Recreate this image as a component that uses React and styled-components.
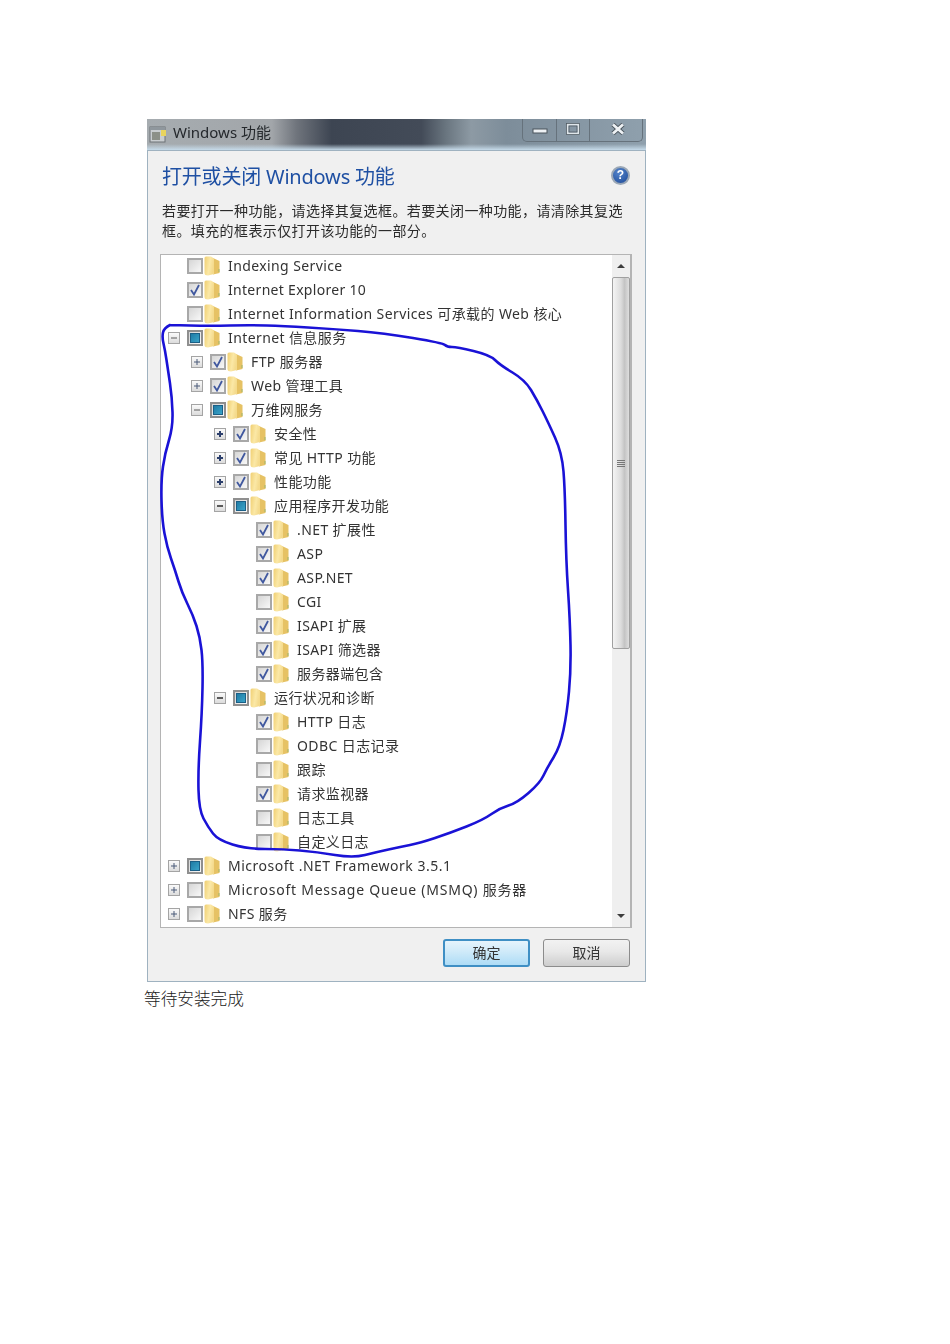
import React, { useId } from 'react'
import styled, { createGlobalStyle } from 'styled-components'

const FONT = `"Noto Sans", "Noto Sans CJK SC", sans-serif`

const rows = [
  { level: 0, state: 'empty', text: 'Indexing Service' },
  { level: 0, state: 'checked', text: 'Internet Explorer 10', spread: 0.3 },
  { level: 0, state: 'empty', text: 'Internet Information Services 可承载的 Web 核心' },
  { level: 0, state: 'partial', toggle: 'minus', text: 'Internet 信息服务' },
  { level: 1, state: 'checked', toggle: 'plus', text: 'FTP 服务器' },
  { level: 1, state: 'checked', toggle: 'plus', text: 'Web 管理工具' },
  { level: 1, state: 'partial', toggle: 'minus', text: '万维网服务' },
  { level: 2, state: 'checked', toggle: 'plus', text: '安全性' },
  { level: 2, state: 'checked', toggle: 'plus', text: '常见 HTTP 功能' },
  { level: 2, state: 'checked', toggle: 'plus', text: '性能功能' },
  { level: 2, state: 'partial', toggle: 'minus', text: '应用程序开发功能' },
  { level: 3, state: 'checked', text: '.NET 扩展性' },
  { level: 3, state: 'checked', text: 'ASP' },
  { level: 3, state: 'checked', text: 'ASP.NET' },
  { level: 3, state: 'empty', text: 'CGI' },
  { level: 3, state: 'checked', text: 'ISAPI 扩展' },
  { level: 3, state: 'checked', text: 'ISAPI 筛选器' },
  { level: 3, state: 'checked', text: '服务器端包含' },
  { level: 2, state: 'partial', toggle: 'minus', text: '运行状况和诊断' },
  { level: 3, state: 'checked', text: 'HTTP 日志' },
  { level: 3, state: 'empty', text: 'ODBC 日志记录' },
  { level: 3, state: 'empty', text: '跟踪' },
  { level: 3, state: 'checked', text: '请求监视器' },
  { level: 3, state: 'empty', text: '日志工具' },
  { level: 3, state: 'empty', text: '自定义日志' },
  { level: 0, state: 'partial', toggle: 'plus', text: 'Microsoft .NET Framework 3.5.1', spread: 0.5 },
  { level: 0, state: 'empty', toggle: 'plus', text: 'Microsoft Message Queue (MSMQ) 服务器', spread: 0.75 },
  { level: 0, state: 'empty', toggle: 'plus', text: 'NFS 服务' },
]

// hand traced pen mark, in page coordinates
const penPoints = [
  [170, 325], [164, 328], [162, 337], [165, 350], [168, 370], [172, 397], [173, 427], [165, 453],
  [161, 480], [162, 520], [167, 547], [175, 570], [182, 593], [193, 615], [200, 637], [203, 663],
  [202, 713], [198, 770], [199, 810], [208, 827], [218, 840], [247, 849], [283, 849], [317, 852],
  [353, 858], [377, 852], [400, 847], [420, 843], [450, 833], [483, 820], [500, 808], [517, 803],
  [540, 783], [547, 768], [560, 747], [567, 713], [571, 670], [570, 620], [566, 560], [565, 490],
  [562, 453], [548, 422], [537, 400], [525, 380], [500, 365], [490, 355], [457, 347], [447, 347],
  [443, 343], [383, 333], [333, 329], [283, 326], [250, 325], [210, 326], [170, 325],
]

// smooth the traced points by curving through their midpoints
function smoothPath(points) {
  const mid = (a, b) => [(a[0] + b[0]) / 2, (a[1] + b[1]) / 2]
  let d = `M${points[0].join(' ')}`
  for (let i = 1; i < points.length - 1; i++) {
    d += ` Q${points[i].join(' ')} ${mid(points[i], points[i + 1]).join(' ')}`
  }
  return d + ` L${points[points.length - 1].join(' ')}`
}

const GlobalStyle = createGlobalStyle`
  body {
    margin: 0;
    background: #fff;
    font-family: ${FONT};
  }
`

const Page = styled.div`
  height: 1344px;
  box-sizing: border-box;
  padding: 119px 0 0 144px;
`

const Window = styled.div`
  position: relative;
  width: 499px;
  margin-left: 3px;
  filter: blur(0.4px);
`

const TitleBar = styled.div`
  display: flex;
  align-items: flex-start;
  height: 31px;
  box-sizing: border-box;
  padding-left: 2px;
  background:
    linear-gradient(to top, #c6dbea, rgba(198, 219, 234, 0) 6px),
    linear-gradient(to right, #a6acb0 0, #a2a6aa 25%, #6f747c 30%, #3d4552 37%, #434b58 55%, #6a7680 60%, #8d9aa4 65%, #7d8d9a 72%, #8fa0ad 100%);
`

const TitleIcon = styled.svg`
  width: 18px;
  height: 18px;
  margin-top: 6px;
  flex: none;
`

const TitleText = styled.div`
  margin: 3px 0 0 6px;
  font-size: 15px;
  line-height: 20px;
  color: #24282c;
`

const CaptionGroup = styled.div`
  display: flex;
  margin: 0 3px 0 auto;
  height: 22px;
  border: 1px solid #66727c;
  border-top: none;
  border-radius: 0 0 5px 5px;
`

const CaptionButton = styled.div`
  display: flex;
  align-items: center;
  justify-content: center;
  width: ${p => p.$w}px;
  padding: ${p => p.$low || 0}px 0 3px ${p => p.$inset || 0}px;
  box-sizing: border-box;
  border-left: ${p => (p.$first ? 'none' : '1px solid #66727c')};
`

const Content = styled.div`
  height: 832px;
  box-sizing: border-box;
  padding: 12px 13px 0 12px;
  background: #f0f0f0;
  border: 1px solid #9fb2c0;
`

const HeadingRow = styled.div`
  display: flex;
  align-items: center;
  justify-content: space-between;
  padding: 0 2px 0 2px;
`

const Heading = styled.h1`
  margin: 0;
  font-size: 20px;
  font-weight: 400;
  letter-spacing: -0.2px;
  line-height: 28px;
  color: #1f50a3;
`

const HelpBadge = styled.div`
  display: flex;
  align-items: center;
  justify-content: center;
  width: 15px;
  height: 15px;
  margin-top: -4px;
  border: 2px solid #9aa7b6;
  border-radius: 50%;
  background: radial-gradient(circle at 40% 30%, #5585cc, #1b4896);
  color: #fff;
  font-family: "Liberation Sans", sans-serif;
  font-size: 12px;
  font-weight: 700;
  line-height: 1;
`

const Description = styled.p`
  margin: 10px 0 13px;
  padding-left: 2px;
  width: 464px;
  font-size: 14px;
  letter-spacing: 0.4px;
  line-height: 20px;
  color: #2b2b2b;
`

const ListBox = styled.div`
  display: flex;
  height: 674px;
  box-sizing: border-box;
  border: 1px solid #b4b4b4;
  border-right-width: 2px;
  background: #fff;
`

const Tree = styled.div`
  flex: 1;
  min-width: 0;
  margin-top: -1px;
  overflow: hidden;
`

const Row = styled.div`
  display: flex;
  align-items: center;
  height: 24px;
  margin-left: ${p => 7 + p.$level * 23}px;
`

const ToggleSlot = styled.div`
  display: flex;
  align-items: center;
  justify-content: center;
  flex: none;
  width: 12px;
  height: 12px;
  margin-right: 7px;
  box-sizing: border-box;
  ${p => p.$visible && `
    border: 1px solid #a4a4a4;
    background: linear-gradient(#fafafa, #dcdcdc);
  `}
`

const Box = styled.div`
  display: flex;
  align-items: center;
  justify-content: center;
  flex: none;
  width: 16px;
  height: 16px;
  box-sizing: border-box;
  border: 2px solid ${p => (p.$state === 'partial' ? '#8f8f8f' : '#a8a8a8')};
  background: linear-gradient(135deg, #d6d6d6, #f8f8f8);
`

const PartialFill = styled.div`
  width: 10px;
  height: 10px;
  background: linear-gradient(135deg, #1f7ca6, #3aa3c8);
  border: 1px solid #1b5f86;
  box-sizing: border-box;
`

const FolderIcon = styled.svg`
  flex: none;
  width: 16px;
  height: 20px;
  margin-left: 1px;
`

const Label = styled.span`
  margin-left: 8px;
  font-size: 14px;
  letter-spacing: ${p => p.$spread}px;
  line-height: 20px;
  white-space: nowrap;
  color: #333;
`

const ScrollBar = styled.div`
  display: flex;
  flex-direction: column;
  flex: none;
  width: 18px;
  background: #efefef;
`

const ScrollButton = styled.div`
  display: flex;
  align-items: center;
  justify-content: center;
  flex: none;
  height: 22px;
`

const Arrow = styled.div`
  width: 0;
  height: 0;
  border-left: 4px solid transparent;
  border-right: 4px solid transparent;
  ${p => (p.$up ? 'border-bottom' : 'border-top')}: 4px solid #3c3c3c;
`

const Thumb = styled.div`
  display: flex;
  flex-direction: column;
  align-items: center;
  justify-content: center;
  gap: 1px;
  height: 372px;
  box-sizing: border-box;
  border: 1px solid #a0a0a0;
  border-radius: 2px;
  background: linear-gradient(to right, #f4f4f4, #dcdcdc 50%, #c4c4c4 72%, #dedede);
`

const Grip = styled.div`
  width: 8px;
  height: 1px;
  background: #777;
`

const TrackFill = styled.div`
  flex: 1;
`

const Footer = styled.div`
  display: flex;
  justify-content: flex-end;
  gap: 13px;
  margin-top: 11px;
  padding-right: 2px;
`

const DialogButton = styled.button`
  width: 87px;
  height: 28px;
  padding: 0 0 2px;
  border-radius: 3px;
  font-family: ${FONT};
  font-size: 14px;
  color: #333;
  border: ${p => (p.$primary ? '2px solid #3f8fc4' : '1px solid #8c8c8c')};
  background: ${p => (p.$primary
    ? 'linear-gradient(#e6f4fc, #cfeaf9 45%, #aedcf6 100%)'
    : 'linear-gradient(#f2f2f2, #e8e8e8 45%, #cdcdcd 100%)')};
`

const PenMark = styled.svg`
  position: absolute;
  top: 0;
  left: 0;
  pointer-events: none;
`

const Caption = styled.div`
  margin-top: 4px;
  font-family: "Noto Sans CJK SC", sans-serif;
  font-size: 16.67px;
  line-height: 24px;
  font-weight: 300;
  color: #222;
`

function Folder() {
  const id = useId()
  return (
    <FolderIcon viewBox="0 0 16 20">
      <defs>
        <linearGradient id={id} x1="0" y1="0" x2="1" y2="0.3">
          <stop offset="0" stopColor="#f0cf72" />
          <stop offset="0.6" stopColor="#fbe8a6" />
          <stop offset="1" stopColor="#f4da8c" />
        </linearGradient>
      </defs>
      <path d="M9 2 L15.5 5 V17 L9 18.5 Z" fill="#e6c264" />
      <path d="M15 13 V16" stroke="#9fb46a" strokeWidth="1" />
      <path d="M0.5 2 Q0.5 0.5 2 0.5 H7 L10 2.5 V18 L4 19.5 Q0.5 19.5 0.5 17 Z" fill={`url(#${id})`} />
    </FolderIcon>
  )
}

function Toggle({ kind, level }) {
  const color = level === 2 ? '#2c3f6c' : '#4a5a78'
  const width = level === 2 ? 2 : 1
  return (
    <ToggleSlot $visible={!!kind}>
      {kind && (
        <svg width="10" height="10" viewBox="0 0 10 10">
          <path d="M2 5 H8" stroke={kind === 'minus' ? '#5a5a5a' : color} strokeWidth={width} />
          {kind === 'plus' && <path d="M5 2 V8" stroke={color} strokeWidth={width} />}
        </svg>
      )}
    </ToggleSlot>
  )
}

function CheckBox({ state }) {
  return (
    <Box $state={state}>
      {state === 'partial' && <PartialFill />}
      {state === 'checked' && (
        <svg width="12" height="12" viewBox="0 0 12 12">
          <path d="M2 6 L5 10.5 L10 1" fill="none" stroke="#40589f" strokeWidth="1.8" />
        </svg>
      )}
    </Box>
  )
}

export default function App() {
  return (
    <Page>
      <GlobalStyle />
      <Window>
        <TitleBar>
          <TitleIcon viewBox="0 0 18 18">
            <rect x="1" y="2" width="15" height="15" fill="#c9cdd0" stroke="#6d7276" />
            <rect x="1" y="2" width="15" height="3" fill="#8f979d" />
            <rect x="3" y="7" width="8" height="8" fill="#8c9088" />
            <rect x="12" y="5" width="5" height="6" fill="#e9d45e" />
          </TitleIcon>
          <TitleText>Windows 功能</TitleText>
          <CaptionGroup>
            <CaptionButton $w={33} $first $low={5}>
              <svg width="16" height="6" viewBox="0 0 16 6">
                <rect x="1" y="1" width="14" height="4" fill="#eef2f5" stroke="#4a545c" />
              </svg>
            </CaptionButton>
            <CaptionButton $w={33}>
              <svg width="14" height="12" viewBox="0 0 14 12">
                <rect x="1.5" y="1.5" width="11" height="9" fill="none" stroke="#dfe6ea" strokeWidth="2" />
                <rect x="0.5" y="0.5" width="13" height="11" fill="none" stroke="#4a545c" strokeWidth="0.7" />
                <rect x="3" y="3" width="8" height="6" fill="none" stroke="#4a545c" strokeWidth="0.7" />
              </svg>
            </CaptionButton>
            <CaptionButton $w={53} $inset={4}>
              <svg width="14" height="12" viewBox="0 0 14 12">
                <path d="M2 1.5 L12 10.5 M12 1.5 L2 10.5" stroke="#4a545c" strokeWidth="4.5" />
                <path d="M2 1.5 L12 10.5 M12 1.5 L2 10.5" stroke="#eef2f5" strokeWidth="2.8" />
              </svg>
            </CaptionButton>
          </CaptionGroup>
        </TitleBar>
        <Content>
          <HeadingRow>
            <Heading>打开或关闭 Windows 功能</Heading>
            <HelpBadge>?</HelpBadge>
          </HeadingRow>
          <Description>
            若要打开一种功能，请选择其复选框。若要关闭一种功能，请清除其复选框。填充的框表示仅打开该功能的一部分。
          </Description>
          <ListBox>
            <Tree>
              {rows.map(row => (
                <Row key={row.text} $level={row.level}>
                  <Toggle kind={row.toggle} level={row.level} />
                  <CheckBox state={row.state} />
                  <Folder />
                  <Label $spread={row.spread ?? 0.4}>{row.text}</Label>
                </Row>
              ))}
            </Tree>
            <ScrollBar>
              <ScrollButton>
                <Arrow $up />
              </ScrollButton>
              <Thumb>
                <Grip />
                <Grip />
                <Grip />
                <Grip />
              </Thumb>
              <TrackFill />
              <ScrollButton>
                <Arrow />
              </ScrollButton>
            </ScrollBar>
          </ListBox>
          <Footer>
            <DialogButton $primary>确定</DialogButton>
            <DialogButton>取消</DialogButton>
          </Footer>
        </Content>
        <PenMark width="499" height="863" viewBox="147 119 499 863">
          <path d={smoothPath(penPoints)} fill="none" stroke="#1a12d6" strokeWidth="2.6" strokeLinejoin="round" strokeLinecap="round" />
        </PenMark>
      </Window>
      <Caption>等待安装完成</Caption>
    </Page>
  )
}
